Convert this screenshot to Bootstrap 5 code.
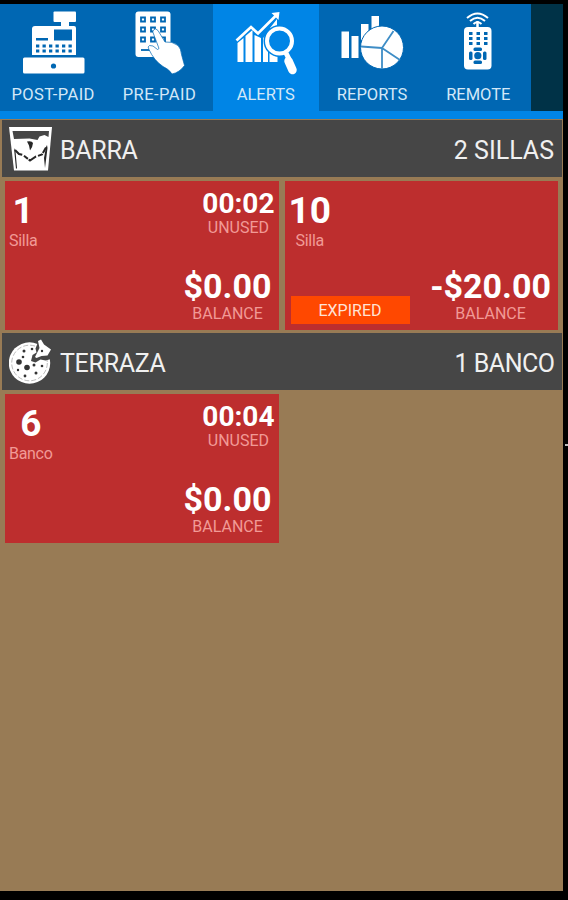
<!DOCTYPE html>
<html lang="en">
<head>
<meta charset="utf-8">
<meta name="viewport" content="width=device-width, initial-scale=1">
<title>Alerts</title>
<link rel="stylesheet" href="https://cdn.jsdelivr.net/npm/bootstrap@5.3.0/dist/css/bootstrap.min.css">
<style>
body{background:#000;font-family:Roboto,"Liberation Sans",sans-serif;height:900px;overflow:hidden}
.screen{width:563px;height:891px;padding-top:4px;background:#987b55}
.top-edge{height:4px;margin-top:-4px;background:#000}
.tabs{background:#003247;height:107px}
.tab{width:106.3px;height:107px;background:#0067b3;color:#d3e8f8;text-decoration:none;font-size:16.5px;line-height:22px}
.tab.active{background:#0085e6}
.tab svg{width:106px;height:80px}
.wide{letter-spacing:.45px}
.strip{height:8px;background:#0085e6}
.area-head{height:57px;margin:1px 1px 0 2px;padding:4px 8px 0 7px;background:#464646;color:#f0f0f0;font-size:25px;line-height:53px}
.area-head svg{width:43px;height:46px;margin:-3px 8px 0 0}
.tight{letter-spacing:-.3px}
.tighter{letter-spacing:-.5px;margin-right:-.5px}
.seats{padding:4px 5px 3px;gap:6px}
.seat{width:273.5px;height:149px;background:#bd2e2e;color:#fff}
.seat .start{padding:9px 0 0 4px}
.seat .num{font-size:37px;line-height:41px}
.seat .sub{font-size:16px;line-height:20px;color:#f19a96}
.start .sub{letter-spacing:-.3px}
.timer{padding:9px 4px 0 0}
.timer .val{font-size:28px;line-height:28px}
.bal{padding:0 7px 6px 0}
.bal .val{font-size:34px;line-height:34px;margin-bottom:1px}
.expired{width:119px;height:28px;margin:0 0 6px 6px;background:#ff4800;color:#ffe3d6;font-size:16px;line-height:29px}
.edge-tick{left:565px;top:444px;width:3px;height:2px;background:#bbb}
</style>
<script src="https://cdn.jsdelivr.net/npm/bootstrap@5.3.0/dist/js/bootstrap.bundle.min.js"></script>
</head>
<body>
<main class="screen">
  <div class="top-edge"></div>
  <nav class="tabs d-flex">
    <a class="tab d-flex flex-column align-items-center" href="#">
      <svg viewBox="0 4 106 80" fill="#fff"><rect x="53.500" y="11.500" width="22.500" height="10.500" rx="1"/><path d="M61 22h8v4h5q2 0 2 2v27H32V29q0-3 3-3h26z"/><rect x="23" y="57.500" width="61.500" height="16" rx="1.500"/><path d="M54 29.500h18v11H54zM36 38h12v2.500H36z" fill="#0067b3"/><path d="M36 46h37M36 51h37" stroke="#0067b3" stroke-width="2.800" stroke-dasharray="3.300 3.200"/><circle cx="53.500" cy="66" r="2.600" fill="#0067b3"/></svg>
      <span class="wide">POST-PAID</span>
    </a>
    <a class="tab d-flex flex-column align-items-center" href="#">
      <svg viewBox="106 4 106 80" fill="#fff"><rect x="135.500" y="11.500" width="35" height="45.500" rx="3"/><g fill="none" stroke="#0067b3" stroke-width="1.800"><path d="M141 17.500h4v4h-4zM151 17.500h4v4h-4zM161 17.500h4v4h-4zM141 27.500h4v4h-4zM151 27.500h4v4h-4zM161 27.500h4v4h-4zM141 37.500h4v4h-4zM151 37.500h4v4h-4zM161 37.500h4v4h-4z"/><path d="M141 50h9"/></g><path d="M153.500 30q2-2.500 4.500.5l7 11.500q7-1 13 3.500 3 3 3.500 9l3 11q-5 7-12.500 8.500-3-5-9-7.500-9-6-14-17-2-3 .5-4 3-1 8 4l1.500-1-6-16q-.5-1.500.5-2.500z" stroke="#0067b3" stroke-width=".7"/></svg>
      <span class="wide">PRE-PAID</span>
    </a>
    <a class="tab active d-flex flex-column align-items-center" href="#">
      <svg viewBox="213 4 106 80" fill="#fff"><path d="M237.500 43l6-5v24h-6zM245.500 36l7-6v32h-7zM254.500 35l6.500 3v24h-6.500zM263 38l5-5v29h-5zM269.500 46l8 8v8h-8zM270 28l7-9v12h-7z"/><path d="M236.500 40.500l14.500-13.500 7 6.500 18.500-18.500" fill="none" stroke="#fff" stroke-width="2.700"/><path d="M271.500 13l8-1-1 8z"/><circle cx="279.500" cy="41" r="14" fill="#0085e6" stroke="#0085e6" stroke-width="4"/><circle cx="279.500" cy="41" r="12.500" fill="none" stroke="#fff" stroke-width="4"/><path d="M286 53l3 6" stroke="#fff" stroke-width="5"/><path d="M288.500 61l4 9" stroke="#fff" stroke-width="8.500" stroke-linecap="round"/></svg>
      <span>ALERTS</span>
    </a>
    <a class="tab d-flex flex-column align-items-center" href="#">
      <svg viewBox="319 4 106 80" fill="#fff"><path d="M341.500 31.500h7.500v26.500h-7.500zM351.500 36h7v22h-7zM361 24h7.500v16H361zM371.500 16h7.500v16h-7.500z"/><circle cx="382" cy="47.500" r="21.500" stroke="#0067b3" stroke-width="1"/><path d="M382 48V69M382 48L361 46.500M382 48L393.500 31M382 48L400 60" stroke="#3e8dc6" stroke-width="1.800"/></svg>
      <span>REPORTS</span>
    </a>
    <a class="tab d-flex flex-column align-items-center" href="#">
      <svg viewBox="425 4 106 80" fill="#fff"><rect x="464" y="27" width="27.500" height="42.500" rx="4"/><path d="M477.500 21v7" stroke="#fff" stroke-width="2.500"/><g fill="none" stroke="#fff" stroke-width="2"><path d="M467 18q10.500-9 21 0M470 21q7.500-6.500 15 0M473.500 24q4-3.500 8 0"/></g><path d="M469 33.500h18.500M469 38.500h18.500M469 43.500h18.500" stroke="#0067b3" stroke-width="3" stroke-dasharray="3.500 4"/><g fill="#0067b3"><rect x="473.500" y="47.500" width="8.500" height="3.500" rx="1.500"/><rect x="473.500" y="60.500" width="8.500" height="3.500" rx="1.500"/><rect x="469" y="51.500" width="3.500" height="8.500" rx="1.500"/><rect x="483" y="51.500" width="3.500" height="8.500" rx="1.500"/><circle cx="477.800" cy="55.700" r="3.600"/></g></svg>
      <span>REMOTE</span>
    </a>
  </nav>
  <div class="strip"></div>

  <header class="area-head d-flex align-items-center">
    <svg viewBox="9 126 43 46"><path d="M9 127h43l-4 43.500H14z" fill="#fff"/><path d="M12.500 131h36.500l-.5 6-4-2-5 1.500-2 3.500-8-1.500-15.500.5z" fill="#464646"/><path d="M27 141.500q5-1 6 1.500-.5 5-3 7.500l-1-5zM46 147l1-2 .5 3-1.500 12-1 8-1-10zM14 148l1.500 3 1.500 17-1 1z" fill="#262626"/><path d="M15 150l4 4 4 1 7 5.500 6-4 6-2 4-7" fill="none" stroke="#262626" stroke-width="2" stroke-dasharray="9 2 5 1"/></svg>
    <span class="tight">BARRA</span><span class="ms-auto">2 SILLAS</span>
  </header>
  <section class="seats d-flex">
    <article class="seat d-flex justify-content-between">
      <div class="start text-center"><div class="num fw-bold">1</div><div class="sub">Silla</div></div>
      <div class="d-flex flex-column justify-content-between align-items-end">
        <div class="timer text-center"><div class="val fw-bold">00:02</div><div class="sub">UNUSED</div></div>
        <div class="bal text-center"><div class="val fw-bold">$0.00</div><div class="sub">BALANCE</div></div>
      </div>
    </article>
    <article class="seat d-flex justify-content-between">
      <div class="d-flex flex-column justify-content-between align-items-start">
        <div class="start text-center"><div class="num fw-bold">10</div><div class="sub">Silla</div></div>
        <div class="expired text-center">EXPIRED</div>
      </div>
      <div class="bal text-center align-self-end"><div class="val fw-bold">-$20.00</div><div class="sub">BALANCE</div></div>
    </article>
  </section>

  <header class="area-head d-flex align-items-center mt-0">
    <svg viewBox="9 339 43 46"><circle cx="29.500" cy="363" r="20.700" fill="#fff"/><circle cx="29.500" cy="363" r="17.800" fill="none" stroke="#aaa" stroke-width=".8" stroke-dasharray="5 2"/><path d="M31 361l1.500-6 4-2.500-1-4 4-10 12 8 1 12-7 2-5-1-5 3z" fill="#464646"/><path d="M35 357l2.500-5 2-4-1.500-7 3-1.500 3 5 7 5-3.500 6-6 .5-5 2z" fill="#fff"/><g fill="#333"><circle cx="19" cy="362" r="2.800"/><circle cx="27" cy="367.500" r="2.800"/><circle cx="24" cy="351" r="1.500"/><circle cx="32" cy="349" r="1.300"/><circle cx="23" cy="357" r="1.300"/><circle cx="34" cy="365" r="1.500"/><circle cx="42" cy="366" r="1.300"/><circle cx="36" cy="373" r="1.500"/><circle cx="25" cy="376" r="1.400"/><circle cx="18" cy="370" r="1.200"/><circle cx="42" cy="351" r="1.200"/></g></svg>
    <span class="tight">TERRAZA</span><span class="ms-auto tighter">1 BANCO</span>
  </header>
  <section class="seats d-flex">
    <article class="seat d-flex justify-content-between">
      <div class="start text-center"><div class="num fw-bold">6</div><div class="sub">Banco</div></div>
      <div class="d-flex flex-column justify-content-between align-items-end">
        <div class="timer text-center"><div class="val fw-bold">00:04</div><div class="sub">UNUSED</div></div>
        <div class="bal text-center"><div class="val fw-bold">$0.00</div><div class="sub">BALANCE</div></div>
      </div>
    </article>
  </section>
</main>
<div class="edge-tick position-absolute"></div>
</body>
</html>
